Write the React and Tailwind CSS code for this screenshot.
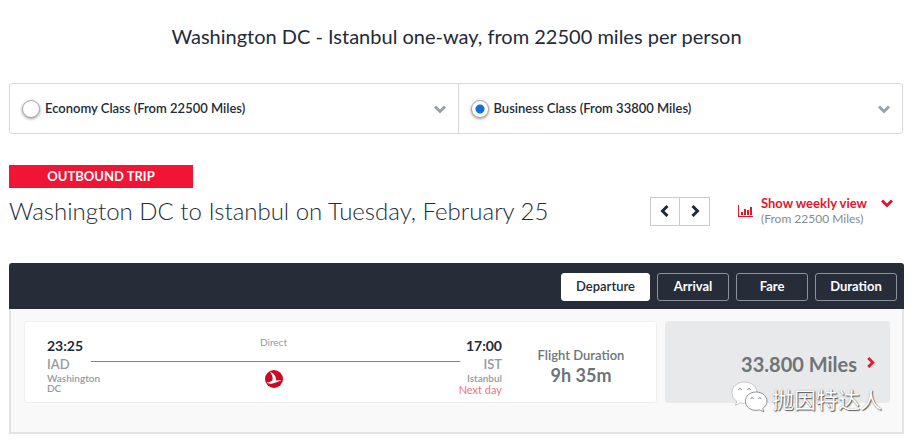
import React, { useState } from "react";

const cabins = [
  { id: "economy", label: "Economy Class (From 22500 Miles)", width: "w-[449px]" },
  { id: "business", label: "Business Class (From 33800 Miles)", width: "w-[444px]" },
];

const sortOptions = [
  { name: "Departure", width: "w-[89px]" },
  { name: "Arrival", width: "w-[72px]" },
  { name: "Fare", width: "w-[72px]" },
  { name: "Duration", width: "w-[82px]" },
];

const Chevron = ({ className, d, size = 12, stroke = 3 }) => (
  <svg className={className} width={size} height={size} viewBox="0 0 12 12" fill="none" stroke="currentColor" strokeWidth={stroke}>
    <path d={d} />
  </svg>
);

const DOWN = "M1 3.5 L6 8.5 L11 3.5";
const LEFT = "M8.5 1 L3.5 6 L8.5 11";
const RIGHT = "M3.5 1 L8.5 6 L3.5 11";

const AirlineLogo = () => (
  <svg className="mr-1" width="18" height="18" viewBox="0 0 18 18">
    <circle cx="9" cy="9" r="9" fill="#c90a22" />
    <path d="M5 2 C9 3.4 11.4 6.6 11.2 10.4 L16.6 10 C14 11.4 11 12.6 7.6 13.4 C4.8 14 3 13.6 1.6 12.6 C4.4 12.4 6.6 11.6 7.4 10 C8.2 7.8 7.2 4.8 5 2 Z" fill="#fff" />
  </svg>
);

const WeChatLogo = () => (
  <svg width="37" height="33" viewBox="0 0 37 33" stroke="#777" strokeWidth="0.8">
    <path d="M13.5 1 C6.4 1 1 5.6 1 11.6 C1 15.2 2.8 18.2 5.8 20.2 L4.4 24.4 L9.2 21.8 C10.6 22.2 12 22.4 13.5 22.4 C20.6 22.4 26 17.6 26 11.6 C26 5.6 20.6 1 13.5 1 Z" fill="#fff" stroke="#bbb" />
    <path d="M25 11 C19 11 14.4 15 14.4 20.2 C14.4 25.4 19 29.4 25 29.4 C26.4 29.4 27.6 29.2 28.8 28.8 L32.8 31 L31.8 27.4 C34.4 25.8 36 23.2 36 20.2 C36 15 31.2 11 25 11 Z" fill="#fff" />
    <path d="M7.4 8.6 q1.6 -2.2 3.2 0 M16.4 8.6 q1.6 -2.2 3.2 0 M19.6 17.6 q1.4 -2 2.8 0 M27.4 17.6 q1.4 -2 2.8 0" fill="none" stroke="#777" strokeWidth="1" />
  </svg>
);

const CabinPicker = () => {
  const [cabin, setCabin] = useState("business");

  return (
    <div className="flex mr-px rounded-[3px] border border-[#d8dadb] divide-x divide-[#d8dadb]">
      {cabins.map(({ id, label, width }) => (
        <label key={id} className={`${width} flex items-center h-[49px] px-3 text-[13px] font-semibold whitespace-nowrap cursor-pointer`}>
          <input
            type="radio"
            name="cabin"
            checked={cabin === id}
            onChange={() => setCabin(id)}
            className="appearance-none size-[18px] mr-[5px] rounded-full border border-[#a9a9a9] bg-white shadow-[0_1px_3px_#999] checked:bg-[radial-gradient(circle,#0f6fdc_4px,#fff_5px)]"
          />
          {label}
          <Chevron className="ml-auto text-[#98a1a8]" d={DOWN} />
        </label>
      ))}
    </div>
  );
};

const FlightCard = () => (
  <article className="flex flex-1 h-[82px] border border-[#efefef] rounded-[3px] bg-white">
    <div className="w-[66px] pl-[22px] pt-[15px]">
      <div className="text-sm leading-[18px] font-bold whitespace-nowrap">23:25</div>
      <div className="text-[13px] leading-[18px] font-semibold text-[#939a9f]">IAD</div>
      <div className="text-[10px] leading-[10px] font-semibold text-[#939a9f]">Washington DC</div>
    </div>
    <div className="flex-1 flex flex-col items-center pt-[14px]">
      <div className="mr-1 text-[10px] leading-3 text-[#939a9f]">Direct</div>
      <div className="w-full h-px mt-[13px] mb-2 bg-[#7f8487]" />
      <AirlineLogo />
    </div>
    <div className="w-[42px] flex flex-col items-end pt-[15px] whitespace-nowrap">
      <div className="text-sm leading-[18px] font-bold">17:00</div>
      <div className="text-[13px] leading-[18px] font-semibold text-[#939a9f]">IST</div>
      <div className="text-[10px] leading-[10px] font-semibold text-[#939a9f]">Istanbul</div>
      <div className="text-[11px] leading-[13px] text-[#e57883]">Next day</div>
    </div>
    <div className="w-[154px] pl-1 pt-6 text-center text-[#6d7478]">
      <div className="text-[13px] leading-[18px] font-semibold">Flight Duration</div>
      <div className="text-lg leading-[22px] font-bold">9h 35m</div>
    </div>
  </article>
);

const App = () => {
  const [sortBy, setSortBy] = useState("Departure");

  return (
    <main className="pl-[9px] pr-2 pt-6 font-[Lato,sans-serif] text-[#232b38]">
      <h1 className="mb-[35px] text-xl leading-6 text-center">
        Washington DC - Istanbul one-way, from 22500 miles per person
      </h1>

      <CabinPicker />

      <div className="mt-[31px] w-[184px] bg-[#f01435] text-white text-[13px] leading-[23px] font-bold text-center">
        OUTBOUND TRIP
      </div>

      <div className="flex items-center h-[46px] mb-[29px]">
        <h2 className="text-2xl font-light whitespace-nowrap">
          Washington DC to Istanbul on Tuesday, February 25
        </h2>
        <div className="ml-auto mr-7 flex border border-[#ccc] divide-x divide-[#ccc]">
          <button aria-label="Previous day" className="flex w-[29px] h-[27px] items-center justify-center">
            <Chevron d={LEFT} />
          </button>
          <button aria-label="Next day" className="flex w-[29px] h-[27px] items-center justify-center">
            <Chevron d={RIGHT} />
          </button>
        </div>
        <button className="flex items-center mr-[11px] text-left text-[#e0182f] whitespace-nowrap">
          <svg className="mr-2" width="15" height="12" viewBox="0 0 15 12" fill="currentColor">
            <path d="M0 0h1v11h14v1H0z M3 7h2v3H3z M6 4h2v6H6z M9 5h2v5H9z M12 2h2v8h-2z" />
          </svg>
          <span className="w-[120px]">
            <span className="block text-[13px] leading-[15px] font-bold">Show weekly view</span>
            <span className="block text-xs leading-[15px] text-[#848b90]">(From 22500 Miles)</span>
          </span>
          <Chevron className="mb-4" d={DOWN} />
        </button>
      </div>

      <section>
        <div className="flex justify-end items-center gap-[7px] h-[46px] pt-px pr-[7px] rounded-t-[3px] bg-[#262c38]">
          {sortOptions.map(({ name, width }) => (
            <button
              key={name}
              onClick={() => setSortBy(name)}
              className={`${width} h-7 rounded-[3px] border text-[13px] ${
                sortBy === name ? "bg-white border-white text-[#232b38] font-semibold" : "border-[#8d939c] text-white font-bold"
              }`}
            >
              {name}
            </button>
          ))}
        </div>

        <div className="relative flex gap-2 pl-[13px] pr-3 pt-3 pb-[29px] border-2 border-t-0 border-[#e3e3e3] bg-[#f9f9f9]">
          <FlightCard />
          <button className="flex items-center justify-end w-[225px] h-[82px] pr-[14px] pt-1 rounded-[3px] bg-[#e7e9ea] text-xl font-bold text-[#707476]">
            33.800 Miles
            <Chevron className="ml-2 mb-1 text-[#e81932]" d={RIGHT} size={11} />
          </button>
          <div className="absolute right-5 bottom-[18px] flex items-center gap-1 font-['Noto_Sans_CJK_SC',sans-serif] text-[22px] leading-8 text-white [text-shadow:1px_1px_1px_#555,0_0_1px_#888]">
            <WeChatLogo />
            抛因特达人
          </div>
        </div>
      </section>
    </main>
  );
};

export default App;
